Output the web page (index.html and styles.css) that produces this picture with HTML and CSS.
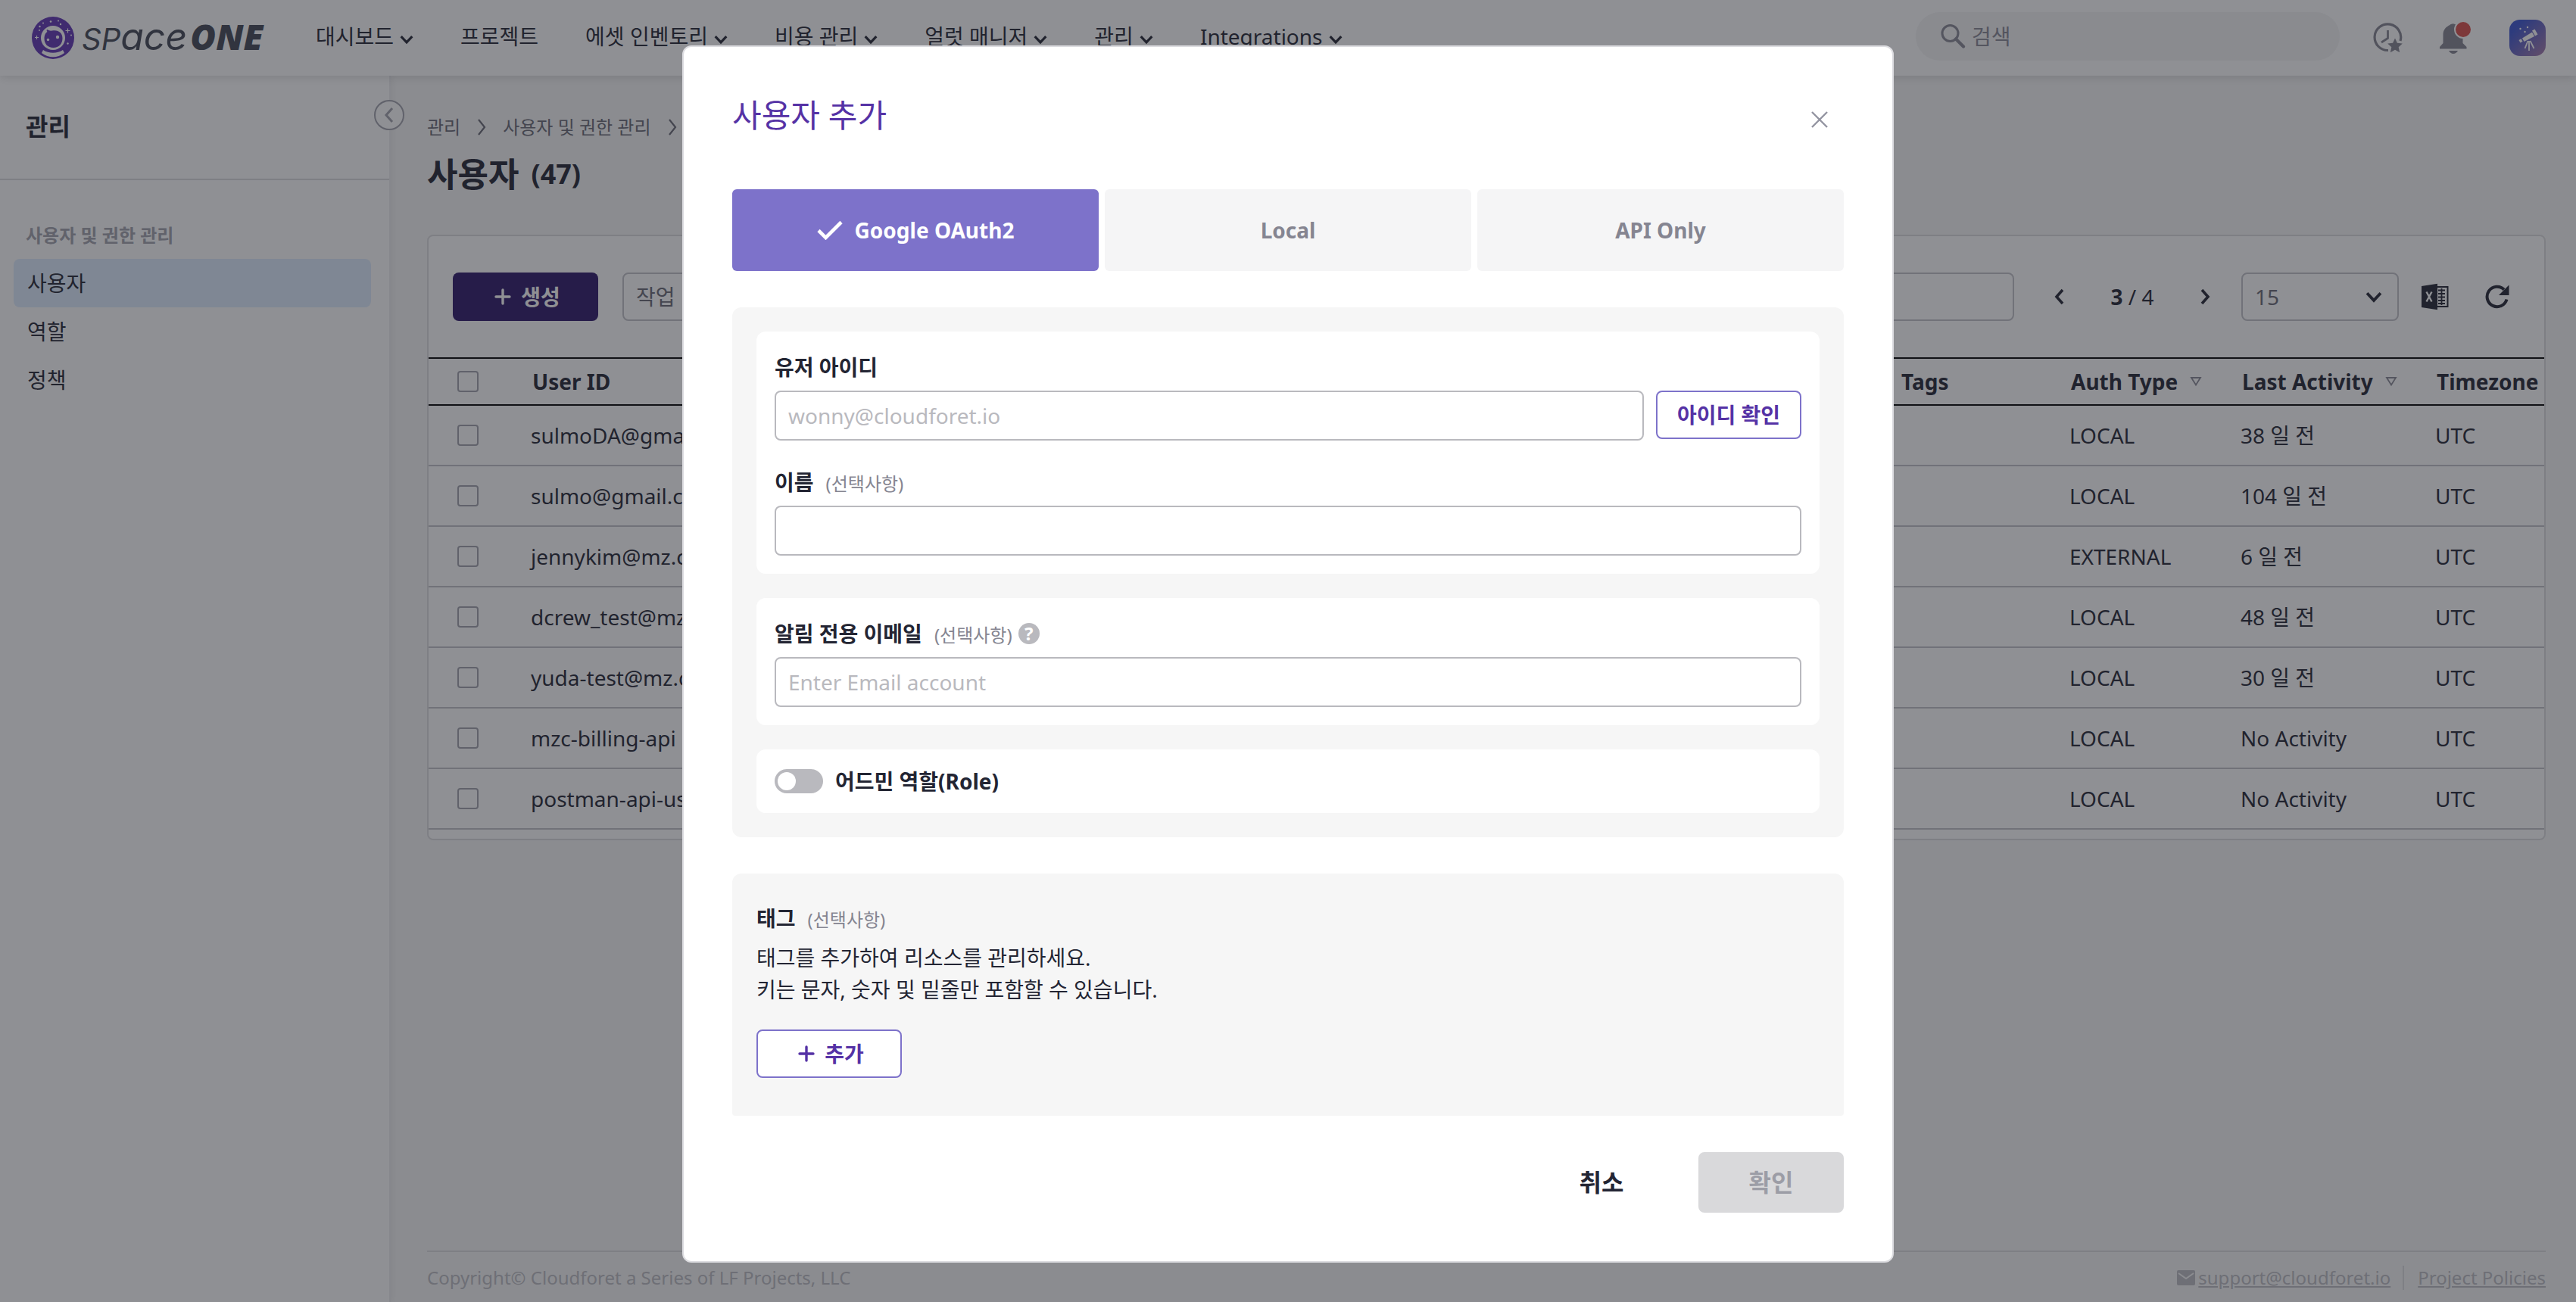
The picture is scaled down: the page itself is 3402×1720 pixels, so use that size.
FILE: index.html
```html
<!DOCTYPE html>
<html lang="ko">
<head>
<meta charset="utf-8">
<meta name="viewport" content="width=device-width, initial-scale=1">
<title>SpaceONE - 사용자</title>
<link rel="stylesheet" href="styles.css">
</head>
<body>
<svg class="sprite" aria-hidden="true">
  <symbol id="i-down" viewBox="0 0 16 16"><path d="M1.500 4.500 8 11.500l6.500-7" fill="none" stroke="currentColor" stroke-width="2.800"/></symbol>
  <symbol id="i-right" viewBox="0 0 24 24"><path d="m8 2 8 10-8 10" fill="none" stroke="currentColor" stroke-width="2.200"/></symbol>
  <symbol id="i-flip" viewBox="0 0 24 24"><path d="m8 3 8 9-8 9" fill="none" stroke="currentColor" stroke-width="3.600"/></symbol>
  <symbol id="i-sort" viewBox="0 0 16 16"><path d="M2 3h12L8 12.500z" fill="none" stroke="currentColor" stroke-width="1.800"/></symbol>
  <symbol id="i-plus" viewBox="0 0 24 24"><path d="M12 3v18M3 12h18" fill="none" stroke="currentColor" stroke-width="3.400" stroke-linecap="round"/></symbol>
</svg>

<div class="page">
  <header class="topbar">
    <a class="logo" href="#" aria-label="SpaceONE">
      <svg class="logo-mark" viewBox="0 0 56 56" aria-hidden="true">
        <circle cx="28" cy="28" r="28" fill="#6035b5"/>
        <circle cx="28" cy="28" r="16" fill="#fff"/>
        <path d="M16.500 29c0-5 2-8 4-9-1-1-1-2-.5-3 2 1 4 2 7 1.500 8-1.500 13.500 3 13.500 10C40.500 36 36 41 28.500 41s-12-5-12-12z" fill="#6035b5"/>
        <circle cx="34" cy="27" r="2.200" fill="#fff"/><circle cx="21.500" cy="30.500" r="1.700" fill="#fff"/>
        <path d="M15 44c7 5 19 5 26 0l2 4c-9 7-21 7-30 0z" fill="#fff"/>
        <g fill="#fff"><circle cx="25" cy="6.500" r="1.300"/><circle cx="35" cy="5.500" r="1"/><circle cx="38" cy="10" r="1.200"/><circle cx="15" cy="8.500" r="1"/><circle cx="10.500" cy="13" r="1.200"/><circle cx="10" cy="18" r=".9"/><circle cx="52" cy="24.500" r="1"/><circle cx="47.500" cy="35.500" r="1.200"/></g>
        <path d="M47.500 15.500v6M44.500 18.500h6M6.500 25v5M4 27.500h5" stroke="#fff" stroke-width="1.200"/>
      </svg>
      <span class="logo-word"><span class="lw-caps">SP</span><span class="lw-low">ace</span><span class="lw-one">ONE</span></span>
    </a>
    <nav class="menu" aria-label="메인 메뉴">
      <a href="#">대시보드<svg><use href="#i-down"/></svg></a>
      <a href="#">프로젝트</a>
      <a href="#">에셋 인벤토리<svg><use href="#i-down"/></svg></a>
      <a href="#">비용 관리<svg><use href="#i-down"/></svg></a>
      <a href="#">얼럿 매니저<svg><use href="#i-down"/></svg></a>
      <a href="#">관리<svg><use href="#i-down"/></svg></a>
      <a href="#">Integrations<svg><use href="#i-down"/></svg></a>
    </nav>
    <label class="search">
      <svg viewBox="0 0 32 32" aria-hidden="true"><circle cx="12.500" cy="12" r="10.500" fill="none" stroke="currentColor" stroke-width="3"/><path d="m20 19.500 10 10" stroke="currentColor" stroke-width="4.200" stroke-linecap="round"/></svg>
      <input type="search" placeholder="검색" aria-label="검색">
    </label>
    <div class="tools">
      <button type="button" class="tool" aria-label="최근 기록 및 즐겨찾기">
        <svg viewBox="0 0 40 40"><path d="M20 36.500A17.300 17.300 0 1 1 36 24" fill="none" stroke="currentColor" stroke-width="3.200"/><path d="M19.500 10v10.500L11 26" fill="none" stroke="currentColor" stroke-width="2.800"/><path d="m29 20.500 2.900 6.300 6.900.8-5.100 4.700 1.400 6.900-6.100-3.500-6.100 3.500 1.400-6.900-5.100-4.700 6.900-.8z" fill="currentColor"/></svg>
      </button>
      <button type="button" class="tool bell" aria-label="알림">
        <svg viewBox="0 0 36 40"><path d="M4.500 27V15.500C4.500 9 9 5 13.500 3c1-2 7-2 8 0 5 2 9 6 9 12.500V27l5 5v2.500H0V32zM12 37h12c-1 2-3.500 4-6 4s-5-2-6-4z" fill="currentColor"/></svg>
        <i class="dot"></i>
      </button>
      <button type="button" class="avatar" aria-label="내 계정">
        <svg viewBox="0 0 48 48"><defs><linearGradient id="av" x1="0" y1="0" x2="1" y2="1"><stop offset=".2" stop-color="#3b55d0"/><stop offset="1" stop-color="#a87aa8"/></linearGradient></defs><rect width="48" height="48" rx="14" fill="url(#av)"/><g fill="#fff"><path d="m17 24.500 13-8 3 5.500-13.500 7zM12.500 27l3-1.800 2 3.600-3 1.600zM30 14.500l3.500-2 4 7-3.500 2z"/><circle cx="14.500" cy="12" r="1.200"/><circle cx="24" cy="10" r="1.200"/><circle cx="20.500" cy="16" r="1.200"/></g><path d="m24.500 28-4 10M26 28v13M27.500 28l5 10" stroke="#fff" stroke-width="1.800"/></svg>
      </button>
    </div>
  </header>

  <div class="body">
    <aside class="sidebar">
      <h2>관리</h2>
      <nav aria-label="관리">
        <h3>사용자 및 권한 관리</h3>
        <a class="on" href="#" aria-current="page">사용자</a>
        <a href="#">역할</a>
        <a href="#">정책</a>
      </nav>
      <button type="button" class="collapse" aria-label="접기"><svg viewBox="0 0 24 24"><path d="m16 3-8 9 8 9" fill="none" stroke="currentColor" stroke-width="3"/></svg></button>
    </aside>

    <main class="main">
      <nav class="crumbs" aria-label="경로">
        <a href="#">관리</a><svg><use href="#i-right"/></svg><a href="#">사용자 및 권한 관리</a><svg><use href="#i-right"/></svg>
      </nav>
      <h1>사용자 <small>(47)</small></h1>

      <section class="card">
        <div class="toolbar">
          <button type="button" class="create"><svg><use href="#i-plus"/></svg>생성</button>
          <span class="select actions"><select aria-label="작업"><option>작업</option></select><svg><use href="#i-down"/></svg></span>
          <input class="filter" type="text" aria-label="필터">
          <div class="pager">
            <button type="button" class="flip" aria-label="이전"><svg><use href="#i-flip"/></svg></button>
            <span class="count"><b>3</b> / 4</span>
            <button type="button" aria-label="다음"><svg><use href="#i-flip"/></svg></button>
          </div>
          <span class="select size"><select aria-label="페이지 크기"><option>15</option></select><svg><use href="#i-down"/></svg></span>
          <div class="acts">
            <button type="button" aria-label="엑셀 내려받기"><svg viewBox="0 0 36 36"><path d="M20 5h14.500v26H20" fill="none" stroke="currentColor" stroke-width="2"/><path d="M0 4 21 .8v34.400L0 32z" fill="currentColor"/><path d="m6.500 11.500 7 13M13.500 11.500l-7 13" stroke="#fff" stroke-width="2.400"/><path d="M22 9.500h9M22 14h9M22 18.500h9M22 23h9M22 27h9M26.500 7v22" stroke="currentColor" stroke-width="1.800"/></svg></button>
            <button type="button" aria-label="새로고침"><svg viewBox="0 0 36 36"><path d="M30.500 21.500A13.200 13.200 0 1 1 27 8.500" fill="none" stroke="currentColor" stroke-width="4"/><path d="M33.500 2.500V16H20z" fill="currentColor"/></svg></button>
          </div>
        </div>
        <table>
          <colgroup><col class="c-check"><col><col class="c-tags"><col class="c-auth"><col class="c-last"><col class="c-zone"></colgroup>
          <thead><tr>
            <th class="pick"><input type="checkbox" aria-label="전체 선택"></th><th>User ID</th><th>Tags</th>
            <th>Auth Type<svg><use href="#i-sort"/></svg></th><th>Last Activity<svg><use href="#i-sort"/></svg></th><th>Timezone</th>
          </tr></thead>
          <tbody>
            <tr><td class="pick"><input type="checkbox" aria-label="선택"></td><td>sulmoDA@gmail.com</td><td></td><td>LOCAL</td><td>38 일 전</td><td>UTC</td></tr>
            <tr><td class="pick"><input type="checkbox" aria-label="선택"></td><td>sulmo@gmail.com</td><td></td><td>LOCAL</td><td>104 일 전</td><td>UTC</td></tr>
            <tr><td class="pick"><input type="checkbox" aria-label="선택"></td><td>jennykim@mz.co.kr</td><td></td><td>EXTERNAL</td><td>6 일 전</td><td>UTC</td></tr>
            <tr><td class="pick"><input type="checkbox" aria-label="선택"></td><td>dcrew_test@mz.co.kr</td><td></td><td>LOCAL</td><td>48 일 전</td><td>UTC</td></tr>
            <tr><td class="pick"><input type="checkbox" aria-label="선택"></td><td>yuda-test@mz.co.kr</td><td></td><td>LOCAL</td><td>30 일 전</td><td>UTC</td></tr>
            <tr><td class="pick"><input type="checkbox" aria-label="선택"></td><td>mzc-billing-api</td><td></td><td>LOCAL</td><td>No Activity</td><td>UTC</td></tr>
            <tr><td class="pick"><input type="checkbox" aria-label="선택"></td><td>postman-api-user</td><td></td><td>LOCAL</td><td>No Activity</td><td>UTC</td></tr>
          </tbody>
        </table>
      </section>

      <footer class="foot">
        <span>Copyright© Cloudforet a Series of LF Projects, LLC</span>
        <div class="foot-links">
          <svg viewBox="0 0 24 20" aria-hidden="true"><rect width="24" height="20" rx="2" fill="currentColor"/><path d="m2 4 10 7 10-7" fill="none" stroke="#f7f7f7" stroke-width="2"/></svg>
          <a href="#">support@cloudforet.io</a>
          <a class="sep" href="#">Project Policies</a>
        </div>
      </footer>
    </main>
  </div>
</div>

<div class="backdrop">
  <form class="modal" role="dialog" aria-modal="true" aria-labelledby="modal-title">
    <header class="modal-head">
      <h2 id="modal-title">사용자 추가</h2>
      <button type="button" class="close" aria-label="닫기"><svg viewBox="0 0 24 24"><path d="m2 2 20 20M22 2 2 22" fill="none" stroke="currentColor" stroke-width="2.400"/></svg></button>
    </header>
    <div class="tabs">
      <button type="button" class="on"><svg viewBox="0 0 34 26"><path d="m2 13.500 9.500 9.500L32 2.500" fill="none" stroke="currentColor" stroke-width="4.600"/></svg>Google OAuth2</button>
      <button type="button">Local</button>
      <button type="button">API Only</button>
    </div>
    <div class="panel">
      <section class="group">
        <div class="field">
          <label for="uid">유저 아이디</label>
          <div class="row"><input id="uid" type="text" placeholder="wonny@cloudforet.io"><button type="button" class="outline">아이디 확인</button></div>
        </div>
        <div class="field">
          <label for="uname">이름 <small>(선택사항)</small></label>
          <input id="uname" type="text">
        </div>
      </section>
      <section class="group">
        <div class="field">
          <label for="email">알림 전용 이메일 <small>(선택사항)</small><span class="help">?</span></label>
          <input id="email" type="email" placeholder="Enter Email account">
        </div>
      </section>
      <section class="group switch-row">
        <input id="role" class="switch" type="checkbox"><label for="role">어드민 역할(Role)</label>
      </section>
    </div>
    <section class="panel tags">
      <h3>태그 <small>(선택사항)</small></h3>
      <p>태그를 추가하여 리소스를 관리하세요.<br>키는 문자, 숫자 및 밑줄만 포함할 수 있습니다.</p>
      <button type="button" class="outline add"><svg><use href="#i-plus"/></svg>추가</button>
    </section>
    <div class="modal-foot">
      <button type="button" class="cancel">취소</button>
      <button type="submit" class="ok" disabled>확인</button>
    </div>
  </form>
</div>
</body>
</html>
```
FILE: styles.css
```css
* { box-sizing: border-box; }
body {
  margin: 0;
  background: #f7f7f7;
  color: #232533;
  font: 28px/42px "Noto Sans", "Noto Sans CJK KR", sans-serif;
}
h1, h2, h3, p { margin: 0; }
a { color: inherit; text-decoration: none; }
button, input, select { font: inherit; color: inherit; margin: 0; }
button { background: none; border: 0; padding: 0; }
svg { display: block; flex: none; }
.sprite { position: absolute; width: 0; height: 0; }

.page { min-height: 100vh; display: flex; flex-direction: column; }

/* Top bar */
.topbar {
  position: relative;
  z-index: 2;
  height: 100px;
  padding: 0 40px 0 42px;
  display: flex;
  align-items: center;
  background: #fff;
  box-shadow: 0 2px 12px rgba(0, 0, 0, .14);
}
.logo { display: flex; align-items: center; gap: 10px; width: 375px; color: #424754; }
.logo-mark { width: 56px; height: 56px; }
.logo-word { font-family: Inter, "Noto Sans", sans-serif; font-style: italic; font-weight: 500; line-height: 56px; display: flex; align-items: baseline; }
.lw-caps { font-size: 40px; font-weight: 400; }
.lw-low { font-size: 50px; font-weight: 400; }
.lw-one { font: italic 900 46px/56px "Noto Sans", sans-serif; margin-left: 4px; }
.menu { display: flex; gap: 62px; padding-bottom: 4px; }
.menu a { display: flex; align-items: center; gap: 8px; white-space: nowrap; }
.menu svg { width: 18px; height: 18px; margin-top: 8px; }
.search {
  margin-left: auto;
  width: 560px;
  height: 64px;
  margin-bottom: 4px;
  padding: 0 32px;
  border-radius: 32px;
  background: #f4f4f5;
  display: flex;
  align-items: center;
  gap: 8px;
  color: #898995;
}
.search svg { width: 34px; height: 32px; }
.search input { flex: 1; min-width: 0; border: 0; background: none; padding: 0; outline: 0; }
.search input::placeholder { color: #898995; opacity: 1; }
.tools { display: flex; align-items: center; margin-left: 44px; color: #858591; }
.tool svg { width: 40px; height: 40px; }
.bell { position: relative; margin-left: 48px; }
.bell svg { width: 36px; overflow: visible; }
.dot { position: absolute; top: -3px; right: -7px; width: 24px; height: 24px; border: 2px solid #fff; border-radius: 50%; background: #db4e4a; }
.avatar { margin-left: 56px; }
.avatar svg { width: 48px; height: 48px; }

/* Sidebar */
.body { flex: 1; display: flex; }
.sidebar { position: relative; flex: none; width: 516px; background: #fff; border-right: 2px solid #ececee; box-shadow: 2px 0 8px rgba(0, 0, 0, .06); }
.sidebar h2 { height: 138px; padding: 46px 34px 0; border-bottom: 2px solid #dddddf; font-size: 32px; }
.sidebar nav { padding: 52px 24px 0 18px; }
.sidebar h3 { padding: 0 16px; margin-bottom: 10px; font-size: 24px; color: #a2a3ad; }
.sidebar nav a { display: block; padding: 11px 18px; border-radius: 8px; }
.sidebar nav .on { background: #dfedfe; }
.collapse {
  position: absolute;
  top: 32px;
  right: -20px;
  width: 40px;
  height: 40px;
  border: 2px solid #a2a3ad;
  border-radius: 50%;
  background: #fff;
  color: #a2a3ad;
  display: grid;
  place-items: center;
}
.collapse svg { width: 24px; height: 24px; }

/* Main */
.main { flex: 1; min-width: 0; padding: 52px 40px 0 48px; display: flex; flex-direction: column; }
.crumbs { display: flex; align-items: center; gap: 16px; font-size: 24px; line-height: 32px; color: #686974; }
.crumbs svg { width: 24px; height: 24px; }
h1 { display: flex; align-items: center; gap: 16px; margin: 16px 0 50px; font-size: 44px; line-height: 60px; }
h1 small { font-size: 36px; }
.card { border: 2px solid #dddddf; border-radius: 8px; background: #fff; padding: 48px 0 12px; overflow: hidden; }
.toolbar { display: flex; align-items: center; height: 64px; padding: 0 38px 0 32px; margin-bottom: 48px; }
.create {
  width: 192px;
  height: 64px;
  border-radius: 8px;
  background: #2c1668;
  color: #fff;
  font-weight: 700;
  display: flex;
  align-items: center;
  justify-content: center;
  gap: 12px;
}
.create svg, .outline svg { width: 24px; height: 24px; }
.create, .add { padding-left: 4px; }
.select { position: relative; display: flex; align-items: center; height: 64px; }
.select select {
  appearance: none;
  width: 100%;
  height: 100%;
  padding: 0 16px;
  border: 2px solid #c3c3c8;
  border-radius: 8px;
  background: #fff;
  color: #686974;
}
.select svg { position: absolute; right: 22px; width: 22px; height: 22px; pointer-events: none; }
.actions { width: 240px; margin: 0 32px; }
.filter { flex: 1; min-width: 0; height: 64px; border: 2px solid #c3c3c8; border-radius: 8px; background: #fff; }
.pager { display: flex; align-items: center; margin: 0 24px 0 36px; }
.pager button, .acts button { width: 48px; height: 48px; display: grid; place-items: center; }
.pager svg { width: 24px; height: 24px; }
.flip svg { transform: rotate(180deg); }
.count { width: 144px; text-align: center; }
.size { width: 208px; }
.acts { display: flex; gap: 34px; margin-left: 24px; }
.acts svg { width: 36px; height: 36px; }

table { width: 100%; table-layout: fixed; border-spacing: 0; }
.c-check { width: 103px; }
.c-tags { width: 224px; }
.c-auth { width: 226px; }
.c-last { width: 257px; }
.c-zone { width: 176px; }
th, td { text-align: left; white-space: nowrap; }
th { height: 64px; padding: 0 0 0 34px; border: solid #000; border-width: 2px 0; }
td { height: 80px; padding: 0 0 0 32px; border-bottom: 2px solid #c3c3c8; }
th svg { display: inline-block; width: 16px; height: 16px; margin: 0 0 6px 16px; color: #898995; vertical-align: middle; }
.pick { padding-left: 38px; }
.pick input { appearance: none; display: block; width: 28px; height: 28px; border: 2px solid #a2a3ad; border-radius: 4px; }

.foot { margin-top: auto; padding: 18px 0 16px; border-top: 2px solid #dddddf; display: flex; justify-content: space-between; font-size: 24px; line-height: 32px; color: #bcbcc2; }
.foot-links { display: flex; align-items: center; gap: 4px; }
.foot-links svg { width: 24px; height: 20px; }
.foot-links a { text-decoration: underline; }
.foot-links .sep { margin-left: 12px; padding-left: 18px; border-left: 2px solid #dddddf; }

/* Dialog */
.backdrop { position: fixed; inset: 0; z-index: 10; display: flex; justify-content: center; align-items: flex-start; padding-top: 60px; background: rgba(31, 33, 42, .5); }
.modal { width: 1600px; max-width: 100%; padding: 60px 64px 64px; border: 2px solid #dcdce0; border-radius: 12px; background: #fff; }
.modal-head { display: flex; justify-content: space-between; align-items: center; margin-bottom: 68px; }
.modal-head h2 { font-size: 42px; font-weight: 400; line-height: 60px; color: #5532a5; }
.close { width: 64px; height: 60px; padding-top: 12px; display: grid; place-items: center; color: #9293a0; }
.close svg { width: 24px; height: 24px; }
.tabs { display: grid; grid-template-columns: repeat(3, 1fr); gap: 8px; margin-bottom: 48px; }
.tabs button { height: 108px; border-radius: 6px; background: #f5f5f6; color: #858591; font-weight: 700; display: flex; align-items: center; justify-content: center; gap: 16px; }
.tabs .on { background: #7d72ca; color: #fff; }
.tabs svg { width: 34px; height: 26px; }
.panel { padding: 32px; border-radius: 12px; background: #f6f6f6; display: grid; gap: 32px; }
.group { padding: 26px 24px 24px; border-radius: 12px; background: #fff; display: grid; gap: 34px; }
.field { display: grid; gap: 10px; }
.field label, .tags h3 { display: flex; align-items: baseline; gap: 16px; font-size: 28px; font-weight: 700; line-height: 42px; }
.field small, .tags small { font-size: 24px; font-weight: 400; line-height: 32px; color: #858591; }
.field input { width: 100%; height: 66px; padding: 0 16px; border: 2px solid #b9b9be; border-radius: 8px; background: #fff; }
.field input::placeholder { color: #b9b9be; opacity: 1; }
.row { display: flex; gap: 16px; }
.row input { flex: 1; min-width: 0; }
.outline { width: 192px; height: 64px; border: 2px solid #7d72ca; border-radius: 8px; background: #fff; color: #5532a5; font-weight: 700; display: flex; align-items: center; justify-content: center; gap: 12px; }
.help { align-self: center; width: 28px; height: 28px; margin-left: -8px; border-radius: 50%; background: #b9b9be; color: #fff; font-size: 24px; line-height: 28px; text-align: center; }
.switch-row { display: flex; align-items: center; gap: 16px; padding: 21px 24px; font-weight: 700; }
.switch { appearance: none; width: 64px; height: 32px; padding: 4px; border-radius: 16px; background: #b9b9be; }
.switch::before { content: ""; display: block; width: 24px; height: 24px; border-radius: 50%; background: #fff; }
.tags { display: block; margin-top: 48px; padding: 38px 32px 50px; border-radius: 12px 12px 4px 4px; }
.tags p { margin: 10px 0 32px; }
.modal-foot { display: flex; justify-content: flex-end; gap: 32px; margin-top: 48px; }
.modal-foot button { width: 192px; height: 80px; border-radius: 8px; font-size: 32px; font-weight: 700; }
.ok { background: #d9d9db; color: #9c9da6; }
```
